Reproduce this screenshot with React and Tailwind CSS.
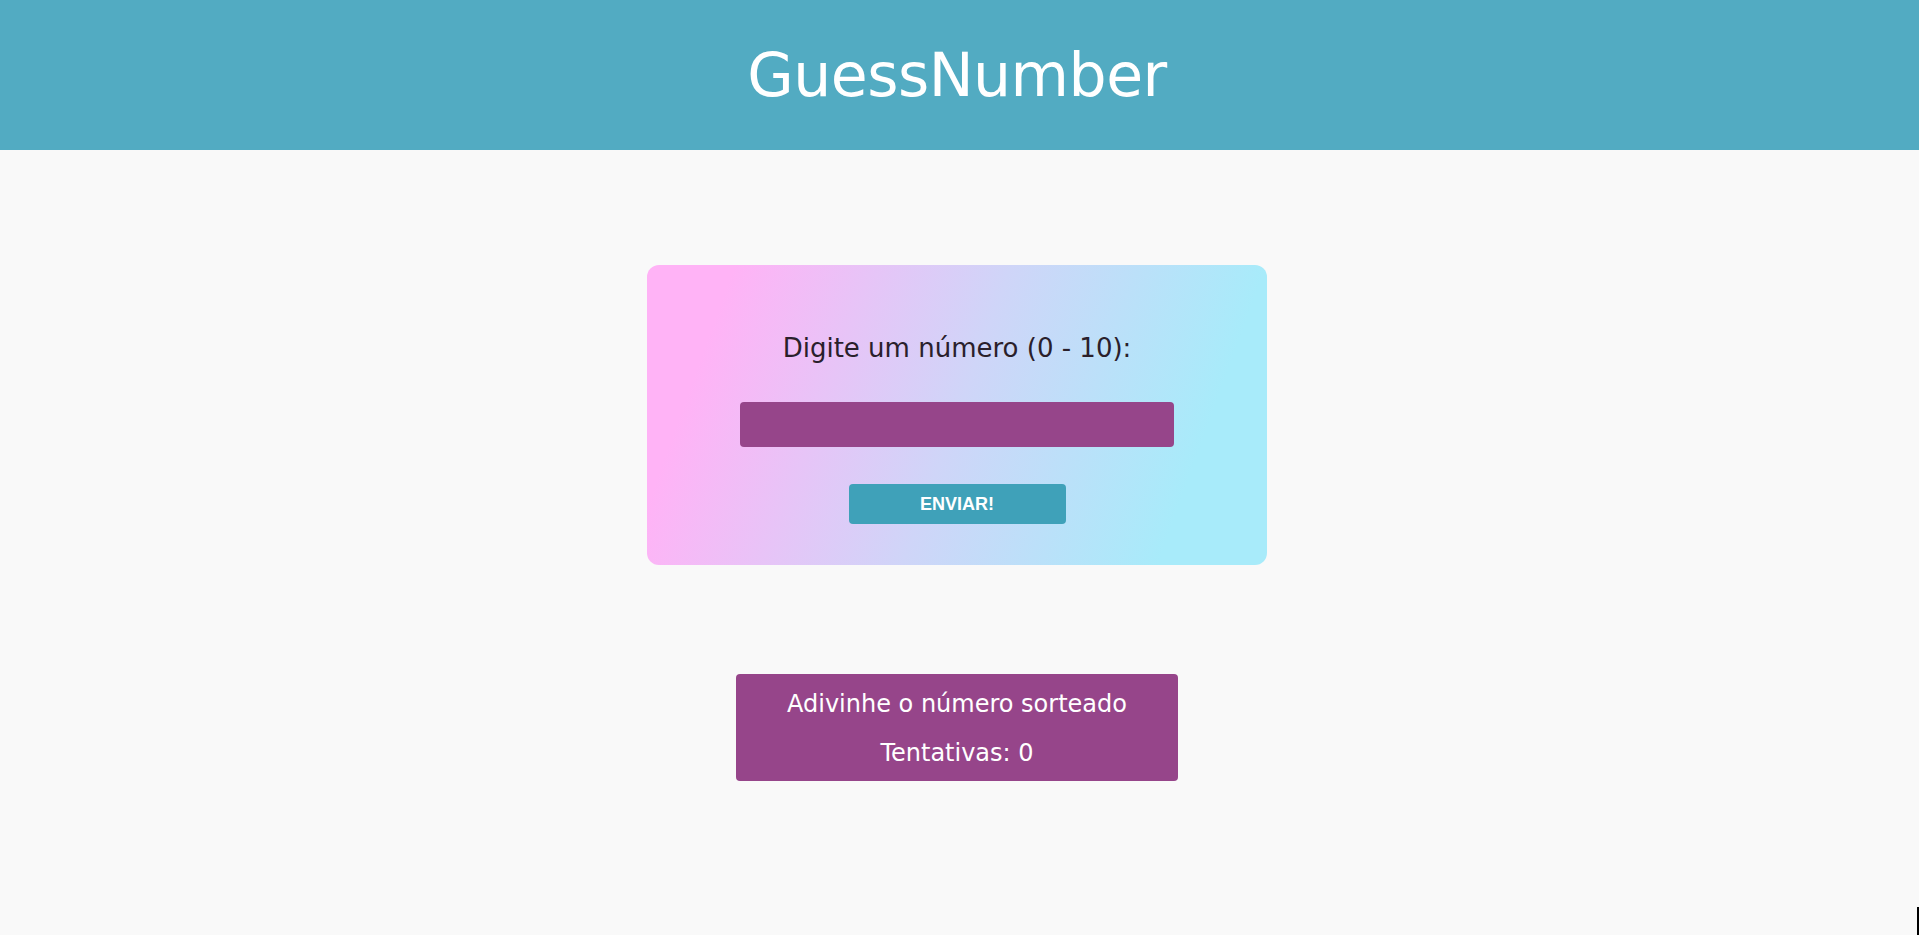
import React, { useState } from 'react';

const App = () => {
    const [guess, setGuess] = useState('');
    const [tries, setTries] = useState(0);

    const handleSubmit = (e) => {
        e.preventDefault();
        setTries((t) => t + 1);
    };

    return (
        <div className="min-h-screen bg-[#f9f9f9] font-['DejaVu_Sans',sans-serif]">
            {/* cabeçalho */}
            <header className="h-[150px] bg-[#52abc2] flex items-center justify-center pr-[5px]">
                <h1 className="text-white text-[60px] font-normal tracking-[-0.5px] leading-none">GuessNumber</h1>
            </header>

            <main className="flex flex-col items-center pr-[5px]">
                <form
                    onSubmit={handleSubmit}
                    className="mt-[115px] w-[620px] h-[300px] rounded-xl bg-[linear-gradient(110deg,#ffb3f6_12%,#cfd5f8_50%,#a8ebfa_85%)] flex flex-col items-center pt-[67px]"
                >
                    <label className="text-[#2a202b] text-[26px] leading-8">Digite um número (0 - 10):</label>
                    <input
                        type="number"
                        value={guess}
                        onChange={(e) => setGuess(e.target.value)}
                        className="mt-[38px] w-[434px] h-[45px] rounded bg-[#96458a] text-white text-xl px-3 outline-none"
                    />
                    <button
                        type="submit"
                        className="mt-[37px] w-[217px] h-[40px] rounded bg-[#3fa1b9] text-white text-[18px] font-bold font-['Liberation_Sans',Arial,sans-serif]"
                    >
                        ENVIAR!
                    </button>
                </form>

                <div className="mt-[109px] w-[442px] h-[107px] rounded bg-[#96458a] text-white text-[24px] flex flex-col items-center pt-[14px] gap-[17px]">
                    <p className="leading-8">Adivinhe o número sorteado</p>
                    <p className="leading-8">Tentativas: {tries}</p>
                </div>
            </main>

            <div className="fixed right-0 bottom-0 w-[2px] h-[28px] bg-black" />
        </div>
    );
};

export default App;
